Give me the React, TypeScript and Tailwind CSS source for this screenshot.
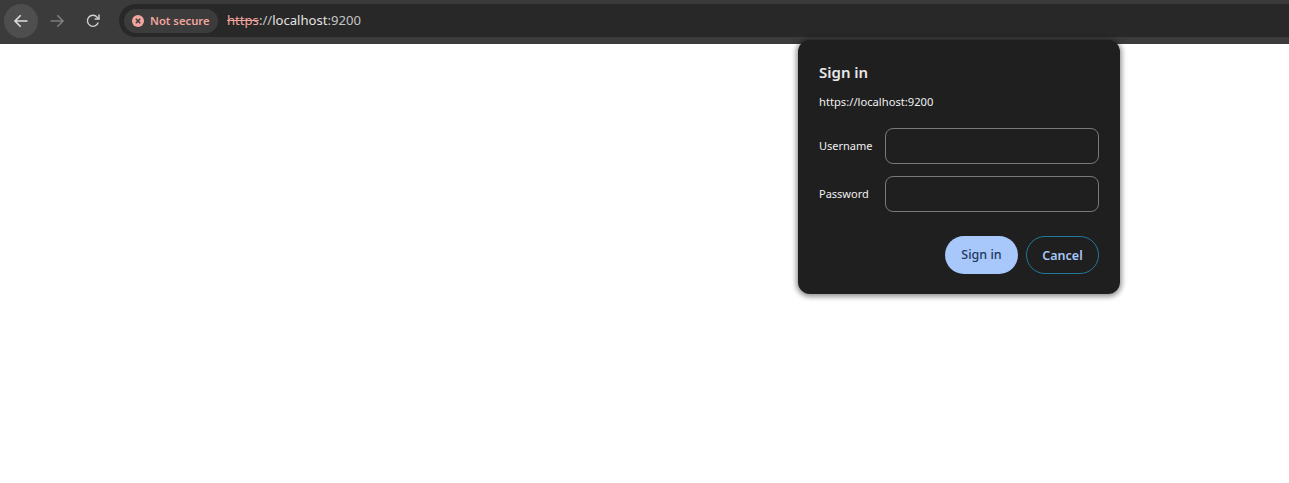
export default function App() {
  return (
    <div className="relative h-[483px] w-[1289px] overflow-hidden bg-white font-['Noto_Sans',sans-serif]">
      <header className="flex h-[44px] items-center bg-[#3b3b3b] pb-[3px] pl-[4px]">
        <div className="flex h-[34px] w-[34px] items-center justify-center rounded-full bg-[#4e4e4e]">
          <svg width="16" height="16" viewBox="0 0 16 16" fill="none" stroke="#dedede" strokeWidth="1.6">
            <path d="M14.5 8H2M7.7 2.2 2 8l5.7 5.8" />
          </svg>
        </div>
        <div className="ml-[2px] flex h-[34px] w-[34px] items-center justify-center">
          <svg width="16" height="16" viewBox="0 0 16 16" fill="none" stroke="#7e7e7e" strokeWidth="1.6">
            <path d="M1.5 8H14M8.3 2.2 14 8l-5.7 5.8" />
          </svg>
        </div>
        <div className="ml-[2px] flex h-[34px] w-[34px] items-center justify-center">
          <svg width="16" height="16" viewBox="0 0 16 16" fill="none" stroke="#d0d0d0" strokeWidth="1.4">
            <path d="M13.2 9.5A5.5 5.5 0 1 1 12.2 4.3L14 6" />
            <path d="M14 1.6V6H9.6" />
          </svg>
        </div>
        <div className="ml-[9px] flex h-[33px] flex-1 items-center rounded-l-full bg-[#282828] pl-[5px]">
          <div className="flex h-[24px] w-[94px] items-center gap-[6px] rounded-full bg-[#3c3c3c] pl-[8px]">
            <svg width="12" height="12" viewBox="0 0 12 12">
              <circle cx="6" cy="6" r="6" fill="#f2a59d" />
              <path d="M3.8 3.8 8.2 8.2M8.2 3.8 3.8 8.2" stroke="#3c3c3c" strokeWidth="1.5" />
            </svg>
            <span className="whitespace-nowrap text-[11.25px] font-semibold leading-none text-[#f2a59d]">Not secure</span>
          </div>
          <div className="ml-[9px] text-[13.1px] leading-none text-[#e3e3e3]">
            <span className="text-[#f2a59d] line-through">https</span>
            <span className="text-[#c4c4c4]">://</span>
            <span>localhost</span>
            <span className="text-[#c4c4c4]">:9200</span>
          </div>
        </div>
      </header>
      <div className="absolute left-[798px] top-[40px] h-[254px] w-[322px] rounded-[12px] bg-[#1f1f1f] py-[20px] pl-[21px] pr-[20px] shadow-[0_1px_5px_2px_rgba(0,0,0,0.4)]">
        <h1 className="mt-[2px] text-[15px] font-semibold leading-[20px] text-[#e8e8e8]">Sign in</h1>
        <p className="mt-[12px] text-[11.2px] leading-[16px] text-[#f0f0f0]">https://localhost:9200</p>
        <div className="mt-[18px] flex items-center">
          <label className="w-[66px] text-[11px] text-[#f0f0f0]">Username</label>
          <div className="h-[36px] w-[214px] rounded-[8px] border border-[#7a7a7a]" />
        </div>
        <div className="mt-[12px] flex items-center">
          <label className="w-[66px] text-[11px] text-[#f0f0f0]">Password</label>
          <div className="h-[36px] w-[214px] rounded-[8px] border border-[#7a7a7a]" />
        </div>
        <div className="mt-[24px] flex w-[280px] justify-end gap-[8px]">
          <button className="h-[38px] w-[73px] rounded-full bg-[#a8c7fa] pt-[1px] text-[12.5px] font-medium text-[#20375f]">Sign in</button>
          <button className="h-[38px] w-[73px] rounded-full border border-[#22789c] pt-[2px] text-[12.5px] font-semibold text-[#a8c7fa]">Cancel</button>
        </div>
      </div>
    </div>
  );
}
